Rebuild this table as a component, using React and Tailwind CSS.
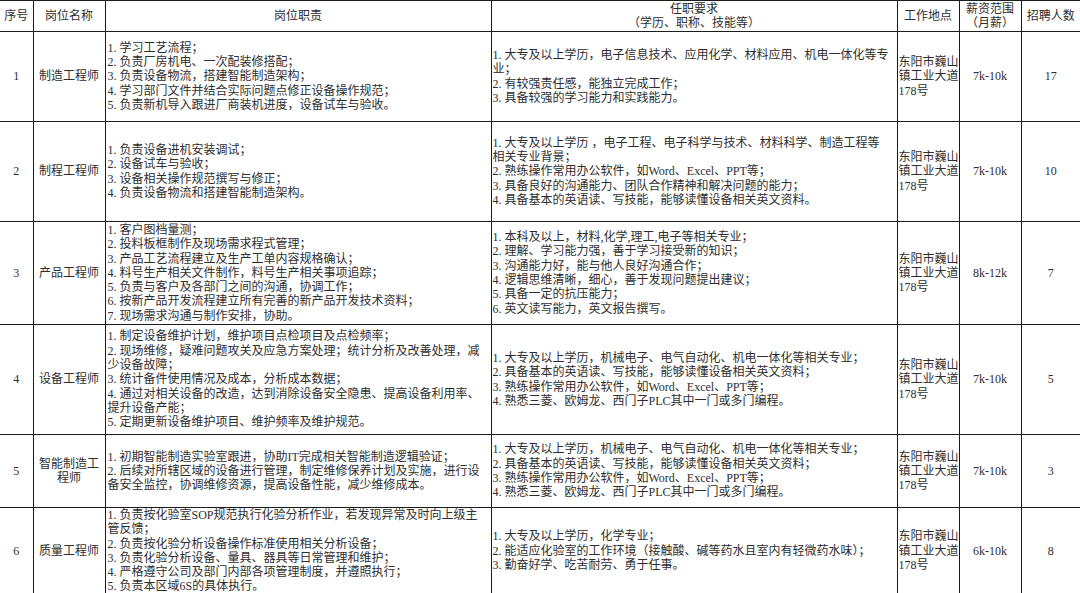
const rows = [
  {
    id: "1",
    name: ["制造工程师"],
    h: "h-[90px]",
    duties: [
      "1. 学习工艺流程；",
      "2. 负责厂房机电、一次配装修搭配；",
      "3. 负责设备物流，搭建智能制造架构；",
      "4. 学习部门文件并结合实际问题点修正设备操作规范；",
      "5. 负责新机导入跟进厂商装机进度，设备试车与验收。",
    ],
    reqs: [
      "1. 大专及以上学历，电子信息技术、应用化学、材料应用、机电一体化等专",
      "业；",
      "2. 有较强责任感，能独立完成工作；",
      "3. 具备较强的学习能力和实践能力。",
    ],
    salary: "7k-10k",
    count: "17",
  },
  {
    id: "2",
    name: ["制程工程师"],
    h: "h-[100px]",
    duties: [
      "1. 负责设备进机安装调试；",
      "2. 设备试车与验收；",
      "3. 设备相关操作规范撰写与修正；",
      "4. 负责设备物流和搭建智能制造架构。",
    ],
    reqs: [
      "1. 大专及以上学历 ，电子工程、电子科学与技术、材料科学、制造工程等",
      "相关专业背景；",
      "2. 熟练操作常用办公软件，如Word、Excel、PPT等；",
      "3. 具备良好的沟通能力、团队合作精神和解决问题的能力；",
      "4. 具备基本的英语读、写技能，能够读懂设备相关英文资料。",
    ],
    salary: "7k-10k",
    count: "10",
  },
  {
    id: "3",
    name: ["产品工程师"],
    h: "h-[103px]",
    duties: [
      "1. 客户图档量测；",
      "2. 投料板框制作及现场需求程式管理；",
      "3. 产品工艺流程建立及生产工单内容规格确认；",
      "4. 料号生产相关文件制作，料号生产相关事项追踪；",
      "5. 负责与客户及各部门之间的沟通，协调工作；",
      "6. 按新产品开发流程建立所有完善的新产品开发技术资料；",
      "7. 现场需求沟通与制作安排，协助。",
    ],
    reqs: [
      "1. 本科及以上，材料,化学,理工,电子等相关专业；",
      "2. 理解、学习能力强，善于学习接受新的知识；",
      "3. 沟通能力好，能与他人良好沟通合作；",
      "4. 逻辑思维清晰，细心，善于发现问题提出建议；",
      "5. 具备一定的抗压能力；",
      "6. 英文读写能力，英文报告撰写。",
    ],
    salary: "8k-12k",
    count: "7",
  },
  {
    id: "4",
    name: ["设备工程师"],
    h: "h-[110px]",
    duties: [
      "1. 制定设备维护计划，维护项目点检项目及点检频率；",
      "2. 现场维修，疑难问题攻关及应急方案处理；统计分析及改善处理，减",
      "少设备故障；",
      "3. 统计备件使用情况及成本，分析成本数据；",
      "4. 通过对相关设备的改造，达到消除设备安全隐患、提高设备利用率、",
      "提升设备产能；",
      "5. 定期更新设备维护项目、维护频率及维护规范。",
    ],
    reqs: [
      "1. 大专及以上学历，机械电子、电气自动化、机电一体化等相关专业；",
      "2. 具备基本的英语读、写技能，能够读懂设备相关英文资料；",
      "3. 熟练操作常用办公软件，如Word、Excel、PPT等；",
      "4. 熟悉三菱、欧姆龙、西门子PLC其中一门或多门编程。",
    ],
    salary: "7k-10k",
    count: "5",
  },
  {
    id: "5",
    name: ["智能制造工", "程师"],
    h: "h-[73px]",
    duties: [
      "1. 初期智能制造实验室跟进，协助IT完成相关智能制造逻辑验证；",
      "2. 后续对所辖区域的设备进行管理，制定维修保养计划及实施，进行设",
      "备安全监控，协调维修资源，提高设备性能，减少维修成本。",
    ],
    reqs: [
      "1. 大专及以上学历，机械电子、电气自动化、机电一体化等相关专业；",
      "2. 具备基本的英语读、写技能，能够读懂设备相关英文资料；",
      "3. 熟练操作常用办公软件，如Word、Excel、PPT等；",
      "4. 熟悉三菱、欧姆龙、西门子PLC其中一门或多门编程。",
    ],
    salary: "7k-10k",
    count: "3",
  },
  {
    id: "6",
    name: ["质量工程师"],
    h: "h-[86px]",
    duties: [
      "1. 负责按化验室SOP规范执行化验分析作业，若发现异常及时向上级主",
      "管反馈；",
      "2. 负责按化验分析设备操作标准使用相关分析设备；",
      "3. 负责化验分析设备、量具、器具等日常管理和维护；",
      "4. 严格遵守公司及部门内部各项管理制度，并遵照执行；",
      "5. 负责本区域6S的具体执行。",
    ],
    reqs: [
      "1. 大专及以上学历，化学专业；",
      "2. 能适应化验室的工作环境（接触酸、碱等药水且室内有轻微药水味）；",
      "3. 勤奋好学、吃苦耐劳、勇于任事。",
    ],
    salary: "6k-10k",
    count: "8",
  },
];

const cell = "border border-[#1c1c1c] p-0 align-middle";

const Lines = ({ items, className = "" }) => (
  <div className={className}>
    {items.map((t, i) => (
      <div key={i} className="whitespace-nowrap">
        {t}
      </div>
    ))}
  </div>
);

const App = () => {
  return (
    <div
      className="w-[1080px] h-[593px] overflow-hidden bg-white text-[#2e2e2e] text-[12px] leading-[14.3px]"
      style={{ fontFamily: '"Liberation Serif", "Noto Sans CJK SC", serif' }}
    >
      <table className="table-fixed border-collapse w-[1080px]">
        <colgroup>
          <col className="w-[33px]" />
          <col className="w-[72px]" />
          <col className="w-[386px]" />
          <col className="w-[406px]" />
          <col className="w-[62px]" />
          <col className="w-[62px]" />
          <col className="w-[59px]" />
        </colgroup>
        <thead>
          <tr className="h-[31px]">
            <th className={`${cell} font-normal text-center border-l-0`}>序号</th>
            <th className={`${cell} font-normal text-center`}>岗位名称</th>
            <th className={`${cell} font-normal text-center`}>岗位职责</th>
            <th className={`${cell} font-normal text-center`}>
              <div>任职要求</div>
              <div>（学历、职称、技能等）</div>
            </th>
            <th className={`${cell} font-normal text-center`}>工作地点</th>
            <th className={`${cell} font-normal text-center`}>
              <div>薪资范围</div>
              <div>（月薪）</div>
            </th>
            <th className={`${cell} font-normal text-center border-r-0`}>招聘人数</th>
          </tr>
        </thead>
        <tbody>
          {rows.map((r) => (
            <tr key={r.id} className={r.h}>
              <td className={`${cell} text-center border-l-0`}>{r.id}</td>
              <td className={`${cell} text-center`}>
                {r.name.map((n) => (
                  <div key={n}>{n}</div>
                ))}
              </td>
              <td className={cell}>
                <Lines items={r.duties} className="pl-[2px]" />
              </td>
              <td className={cell}>
                <Lines items={r.reqs} className="pl-[1px]" />
              </td>
              <td className={cell}>
                <Lines items={["东阳市巍山", "镇工业大道", "178号"]} className="pl-[1px]" />
              </td>
              <td className={`${cell} text-center`}>{r.salary}</td>
              <td className={`${cell} text-center border-r-0`}>{r.count}</td>
            </tr>
          ))}
        </tbody>
      </table>
    </div>
  );
};

export default App;
